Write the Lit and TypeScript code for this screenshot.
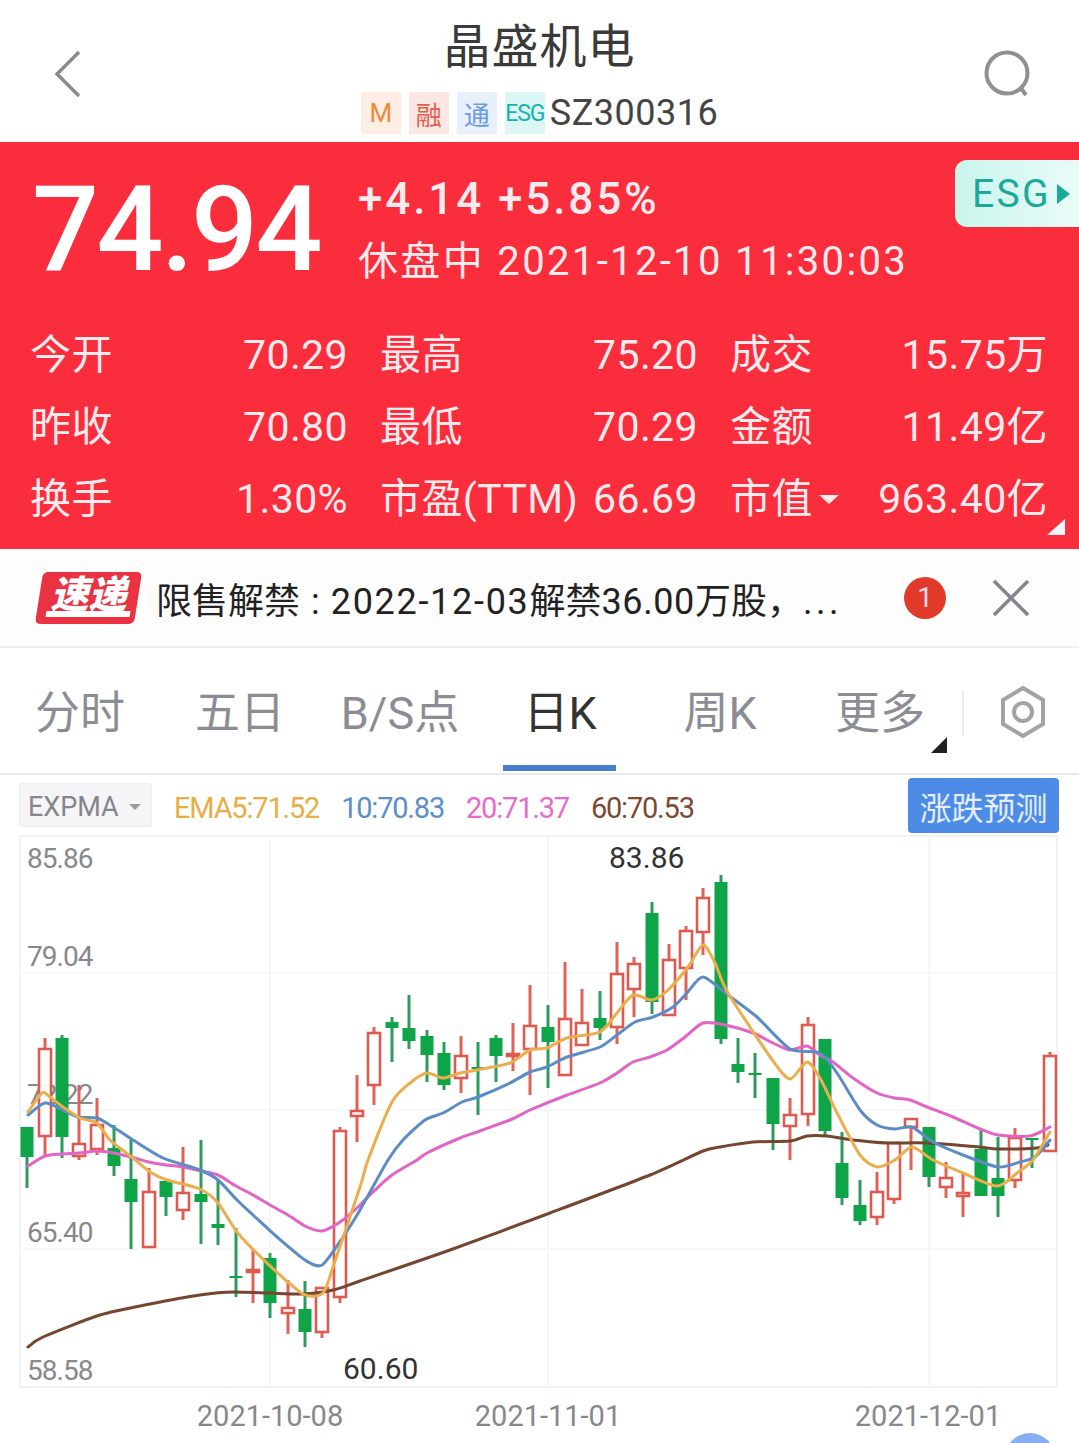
import { LitElement, html, css, svg } from "lit";
import { customElement } from "lit/decorators.js";

type Candle = [number, "r" | "g", number, number, number, number];
const candles: Candle[] = [
  [27,"g",1127,1127,1157,1188],[45,"r",1038,1049,1136,1157],[62,"g",1035,1038,1137,1158],[79,"r",1085,1144,1156,1160],
  [97,"r",1098,1125,1149,1155],[114,"g",1125,1148,1166,1176],[131,"g",1140,1179,1202,1249],[149,"r",1168,1192,1247,1247],
  [166,"g",1180,1181,1197,1216],[183,"r",1147,1193,1210,1220],[201,"g",1140,1194,1202,1244],[218,"g",1180,1224,1228,1245],
  [236,"g",1228,1276,1278,1297],[253,"r",1249,1270,1272,1303],[270,"g",1253,1258,1303,1318],[288,"r",1280,1308,1313,1334],
  [305,"g",1281,1309,1332,1347],[322,"r",1287,1288,1332,1338],[340,"r",1127,1131,1297,1303],[357,"r",1075,1111,1116,1142],
  [374,"r",1027,1033,1085,1105],[392,"g",1017,1022,1028,1062],[409,"g",995,1028,1041,1049],[427,"g",1030,1036,1055,1082],
  [444,"g",1042,1053,1085,1090],[461,"r",1036,1056,1078,1093],[478,"g",1042,1067,1069,1115],[496,"g",1035,1038,1056,1082],
  [513,"r",1023,1054,1056,1071],[530,"r",985,1026,1049,1095],[548,"g",1005,1027,1042,1088],[565,"r",962,1019,1075,1075],
  [582,"r",989,1023,1045,1045],[600,"g",991,1018,1028,1040],[617,"r",942,974,1027,1044],[634,"r",957,964,989,1017],
  [652,"g",902,913,1002,1014],[669,"r",944,960,1015,1015],[686,"r",926,931,968,1000],[703,"r",888,898,932,955],
  [721,"g",875,882,1039,1044],[738,"g",1038,1064,1072,1083],[755,"g",1053,1073,1075,1098],[773,"g",1078,1078,1124,1150],
  [790,"r",1098,1115,1126,1160],[808,"r",1017,1025,1114,1126],[825,"g",1039,1039,1131,1136],[842,"g",1132,1163,1198,1205],
  [860,"g",1180,1205,1221,1225],[877,"r",1172,1192,1217,1225],[894,"r",1142,1143,1199,1204],[911,"r",1119,1119,1127,1170],
  [929,"g",1127,1127,1177,1187],[946,"r",1162,1178,1187,1198],[963,"r",1173,1193,1196,1217],[981,"g",1130,1149,1196,1196],
  [998,"g",1137,1178,1196,1217],[1015,"r",1128,1138,1180,1188],[1032,"g",1138,1138,1140,1168],[1050,"r",1052,1056,1151,1151],
];

const pink = "28,1166 45,1156 62,1154 79,1153 97,1151 114,1153 131,1157 149,1162 166,1165 183,1167 201,1171 218,1175 236,1186 253,1195 270,1205 288,1215 305,1226 322,1231 340,1222 357,1208 374,1191 392,1175 417,1160 427,1153 460,1138 477,1132 510,1120 530,1110 547,1103 567,1095 600,1083 617,1073 633,1062 650,1057 667,1050 685,1037 703,1023 725,1025 753,1033 773,1043 790,1050 807,1046 820,1055 833,1062 853,1078 877,1093 895,1098 910,1100 927,1107 953,1117 980,1129 998,1135 1030,1136 1050,1127";
const blue = "28,1115 45,1103 63,1110 78,1117 97,1118 113,1127 133,1140 163,1158 200,1170 218,1180 237,1200 253,1215 277,1237 305,1260 322,1265 343,1237 360,1210 388,1160 403,1140 425,1120 443,1113 462,1102 478,1097 510,1083 530,1072 547,1067 567,1057 600,1047 617,1035 635,1022 653,1017 673,1007 687,993 703,977 728,995 757,1017 790,1049 820,1053 837,1073 860,1110 877,1125 895,1129 912,1127 933,1142 963,1155 998,1167 1020,1162 1035,1157 1050,1140";
const orange = "28,1112 42,1093 50,1097 63,1107 80,1118 97,1123 110,1140 133,1158 150,1172 167,1180 200,1189 218,1203 237,1232 267,1263 303,1294 323,1293 333,1267 360,1187 368,1160 392,1102 410,1083 427,1073 443,1078 460,1073 477,1070 510,1063 530,1050 547,1048 567,1038 600,1032 617,1013 633,995 652,1000 668,990 688,967 703,945 715,963 728,993 773,1061 790,1079 807,1062 820,1078 837,1113 860,1155 877,1167 895,1160 912,1147 933,1160 963,1173 997,1186 1017,1173 1033,1160 1050,1132";
const brown = "28,1347 43,1337 100,1315 150,1304 200,1295 233,1292 303,1294 333,1290 360,1281 450,1250 550,1213 650,1175 703,1151 720,1147 753,1142 790,1141 807,1136 827,1136 853,1140 887,1143 927,1143 980,1147 997,1149 1037,1148 1048,1145";

/** Turns "x,y x,y ..." into a Catmull-Rom smoothed path. */
function smooth(points: string): string {
  const p = points.split(" ").map((s) => s.split(",").map(Number));
  let d = `M${p[0][0]} ${p[0][1]}`;
  for (let i = 0; i < p.length - 1; i++) {
    const a = p[Math.max(i - 1, 0)], b = p[i], c = p[i + 1], e = p[Math.min(i + 2, p.length - 1)];
    const k = 1 / 8;
    d += ` C${b[0] + (c[0] - a[0]) * k} ${b[1] + (c[1] - a[1]) * k} ${c[0] - (e[0] - b[0]) * k} ${c[1] - (e[1] - b[1]) * k} ${c[0]} ${c[1]}`;
  }
  return d;
}

const stats: [string, string, string, string, string, string][] = [
  ["今开","70.29","最高","75.20","成交","15.75万"],
  ["昨收","70.80","最低","70.29","金额","11.49亿"],
  ["换手","1.30%","市盈(TTM)","66.69","市值","963.40亿"],
];
const tabs = ["分时","五日","B/S点","日K","周K","更多"];

@customElement("app-root")
export class AppRoot extends LitElement {
  static styles = css`
    :host { display: block; width: 1079px; height: 1443px; overflow: hidden; background: #fff; color: #333;
      font-family: Roboto, "Noto Sans CJK SC", sans-serif; }
    .header { height: 142px; display: grid; grid-template-columns: 140px 1fr 140px; align-items: center; background: #fff; }
    .back { justify-self: start; margin-left: 54px; margin-top: 6px; }
    .search { justify-self: end; margin-right: 47px; margin-top: 6px; }
    .mid { display: flex; flex-direction: column; align-items: center; padding-top: 22px; align-self: start; }
    .title { font-size: 47px; line-height: 50px; letter-spacing: 1px; color: #3a3a3a; }
    .sub { display: flex; align-items: center; margin-top: 19px; height: 44px; }
    .tag { width: 40px; height: 42px; margin-right: 8px; display: flex; align-items: center; justify-content: center; font-size: 26px; }
    .tag.m { background: #fdeee4; color: #ec8a3c; }
    .tag.r { background: #fbe7e3; color: #e0604c; }
    .tag.t { background: #e9f0fc; color: #6b9ae6; }
    .tag.e { background: #dcf5f5; color: #19b0b0; font-size: 23px; margin-right: 5px; letter-spacing: -1px; }
    .code { font-size: 36px; letter-spacing: 0.5px; color: #444; }
    .red { height: 407px; background: #f92d3c; color: #fff; position: relative; box-sizing: border-box; padding: 0 30px; }
    .top { display: flex; height: 176px; }
    .price { font-size: 118px; line-height: 1; margin: 29px 0 0 2px; width: 326px; letter-spacing: -2.6px; font-weight: 500; }
    .chg { display: flex; flex-direction: column; padding-top: 31px; color: #fdeaec; }
    .chg1 { font-size: 44px; line-height: 52px; letter-spacing: 2.9px; font-weight: 500; }
    .chg2 { font-size: 40px; line-height: 52px; margin-top: 11px; letter-spacing: 2.35px; }
    .esg { position: absolute; right: 0; top: 18px; width: 124px; height: 67px; box-sizing: border-box; padding-left: 17px;
      border-radius: 12px 0 0 12px; background: linear-gradient(90deg, #c9f5ec, #e9fbf9); color: #1ba99a; font-size: 39px;
      letter-spacing: 2.4px; display: flex; align-items: center; gap: 6px; }
    .esg i { width: 0; height: 0; border-left: 13px solid #1ba99a; border-top: 10px solid transparent; border-bottom: 10px solid transparent; }
    .stats { display: grid; grid-template-columns: 350px 350px 1fr; font-size: 41px; color: #fdeaec; margin-top: 1px; letter-spacing: 0.4px; }
    .cell { display: flex; justify-content: space-between; height: 72px; line-height: 72px; padding-right: 32px; }
    .cell:nth-child(3n) { padding-right: 1px; }
    .label { display: flex; align-items: center; gap: 6px; }
    .label i { width: 0; height: 0; border-top: 9px solid #fdeaec; border-left: 10px solid transparent; border-right: 10px solid transparent; }
    .corner { position: absolute; right: 14px; bottom: 14px; width: 0; height: 0; border-left: 18px solid transparent; border-bottom: 16px solid #f4f4f6; }
    .notice { height: 97px; border-bottom: 2px solid #efefef; display: flex; align-items: center; padding-left: 35px; background: #fdfdfd; }
    .logo { width: 107px; height: 52px; margin-right: 14px; flex: none; position: relative; display: flex; justify-content: center; color: #fff;
      font-size: 38px; font-weight: 900; font-style: italic; line-height: 46px; }
    .logo::before { content: ""; position: absolute; inset: 0 4px; background: #ea3342; border-radius: 5px; transform: skewX(-9deg); }
    .logo::after { content: ""; position: absolute; left: 11px; right: 12px; bottom: 7px; height: 6px; background: #fff; transform: skewX(-9deg); }
    .logo span { position: relative; z-index: 1; }
    .ntext { font-size: 36px; color: #222; white-space: nowrap; width: 748px; }
    .colon { margin: 0 11px; }
    .date { letter-spacing: 1.7px; }
    .num { letter-spacing: 0.6px; }
    .dots { letter-spacing: 3.5px; margin-left: 0; }
    .badge { width: 42px; height: 42px; border-radius: 50%; background: #e23a2a; color: #fde; font-size: 28px; display: flex; align-items: center; justify-content: center; flex: none; }
    .close { margin-left: 46px; flex: none; }
    .tabs { height: 127px; display: flex; border-bottom: 2px solid #e9e9ec; box-sizing: border-box; position: relative; background: #fff; }
    .tab { width: 160px; flex: none; display: flex; align-items: center; justify-content: center; font-size: 45px; color: #8c8c94; padding-bottom: 2px; position: relative; box-sizing: border-box; height: 125px; }
    .tab.on { color: #333; }
    .tab.on::after { content: ""; position: absolute; left: 23px; right: 24px; bottom: 2px; height: 6px; background: #4a7ccc; }
    .more::after { content: ""; position: absolute; right: 13px; bottom: 20px; width: 0; height: 0; border-left: 16px solid transparent; border-bottom: 16px solid #222; }
    .tabs-end { flex: 1; display: flex; align-items: flex-start; padding-top: 38px; }
    .div { width: 2px; height: 46px; background: #eee; margin: 4px 36px 0 2px; }
    .ind { height: 60px; display: flex; align-items: center; padding-left: 19px; font-size: 29px; letter-spacing: -1.2px; position: relative; }
    .sel { width: 133px; height: 44px; box-sizing: border-box; background: #f5f5f7; border: 1px solid #eeeef0; border-radius: 3px; color: #85858c; display: flex; align-items: center; padding: 3px 0 0 8px; gap: 10px; margin-right: 22px; font-size: 27px; letter-spacing: 0; }
    .sel i { width: 0; height: 0; border-top: 6px solid #999; border-left: 6px solid transparent; border-right: 6px solid transparent; }
    .leg { margin-right: 22px; margin-top: 6px; }
    .btn { position: absolute; left: 908px; top: 3px; width: 151px; height: 55px; background: #4c8ce6; color: #e4eeff; border-radius: 4px; font-size: 32px; display: flex; align-items: center; justify-content: center; letter-spacing: 0; }
    .chart { display: block; width: 1079px; height: 608px; }
    .chart text { font-family: Roboto, "Noto Sans CJK SC", sans-serif; font-size: 29px; }
    .chart .axis { font-size: 28px; letter-spacing: -0.95px; }
    .chart .extreme { font-size: 30px; letter-spacing: 0; }
    .chart .dt { font-size: 29px; }
  `;

  private candle(c: Candle) {
    const [x, k, t, bt, bb, b] = c;
    if (k === "g") {
      return svg`<line x1=${x} x2=${x} y1=${t} y2=${b} stroke="#2f9a5e" stroke-width="3"/>
        <rect x=${x - 6.5} y=${bt} width="13" height=${Math.max(bb - bt, 2)} fill="#0ea548"/>`;
    }
    return svg`<line x1=${x} x2=${x} y1=${t} y2=${bt} stroke="#dd6359" stroke-width="3"/>
      <line x1=${x} x2=${x} y1=${bb} y2=${b} stroke="#dd6359" stroke-width="3"/>
      <rect x=${x - 6} y=${bt} width="12" height=${Math.max(bb - bt, 2)} fill="#fff" fill-opacity="0.9" stroke="#dc5a50" stroke-width="2.6"/>`;
  }

  render() {
    return html`
      <div class="header">
        <svg class="back" width="28" height="48" viewBox="0 0 28 48"><path d="M25 2 L3 24 L25 46" fill="none" stroke="#8a8a8e" stroke-width="3.5"/></svg>
        <div class="mid">
          <div class="title">晶盛机电</div>
          <div class="sub">
            <span class="tag m">M</span><span class="tag r">融</span><span class="tag t">通</span><span class="tag e">ESG</span>
            <span class="code">SZ300316</span>
          </div>
        </div>
        <svg class="search" width="48" height="48" viewBox="0 0 48 48"><circle cx="23" cy="23" r="20.5" fill="none" stroke="#909094" stroke-width="4"/><path d="M36 37 L42 45" stroke="#909094" stroke-width="4" fill="none"/></svg>
      </div>

      <div class="red">
        <div class="top">
          <div class="price">74.94</div>
          <div class="chg">
            <div class="chg1">+4.14 +5.85%</div>
            <div class="chg2">休盘中 2021-12-10 11:30:03</div>
          </div>
        </div>
        <div class="esg">ESG<i></i></div>
        <div class="stats">
          ${stats.map((r) => html`
            <div class="cell"><span class="label">${r[0]}</span><span>${r[1]}</span></div>
            <div class="cell"><span class="label">${r[2]}</span><span>${r[3]}</span></div>
            <div class="cell"><span class="label">${r[4]}${r[4] === "市值" ? html`<i></i>` : ""}</span><span>${r[5]}</span></div>
          `)}
        </div>
        <div class="corner"></div>
      </div>

      <div class="notice">
        <div class="logo"><span>速递</span></div>
        <div class="ntext">限售解禁<span class="colon">:</span><span class="date">2022-12-03</span>解禁<span class="num">36.00</span>万股，<span class="dots">...</span></div>
        <div class="badge">1</div>
        <svg class="close" width="38" height="38" viewBox="0 0 38 38"><path d="M2 2 L36 36 M36 2 L2 36" stroke="#85858c" stroke-width="3.5" fill="none"/></svg>
      </div>

      <div class="tabs">
        ${tabs.map((t) => html`<div class="tab ${t === "日K" ? "on" : ""} ${t === "更多" ? "more" : ""}">${t}</div>`)}
        <div class="tabs-end">
          <div class="div"></div>
          <svg width="46" height="52" viewBox="0 0 46 52"><path d="M23 2 L43 14 V38 L23 50 L3 38 V14 Z" fill="none" stroke="#a2a2a8" stroke-width="4"/><circle cx="23" cy="26" r="9" fill="none" stroke="#a2a2a8" stroke-width="4"/></svg>
        </div>
      </div>

      <div class="ind">
        <div class="sel">EXPMA<i></i></div>
        <span class="leg" style="color:#e6ae45">EMA5:71.52</span>
        <span class="leg" style="color:#5b8fc9">10:70.83</span>
        <span class="leg" style="color:#e56cc8">20:71.37</span>
        <span class="leg" style="color:#7c4a32">60:70.53</span>
        <div class="btn">涨跌预测</div>
      </div>

      <svg class="chart" viewBox="0 835 1079 608">
        <g stroke="#f2f2f4" stroke-width="2" fill="none">
          <rect x="20" y="836" width="1037" height="551"/>
          <path d="M270 836 V1387 M548 836 V1387 M929 836 V1387" stroke="#f6f6f7"/>
          <path d="M20 973 H1057 M20 1110 H1057 M20 1249 H1057" stroke="#f8f8f9"/>
        </g>
        <g fill="#87878d">
          <text class="axis" x="27" y="868">85.86</text>
          <text class="axis" x="27" y="966">79.04</text>
          <text class="axis" x="27" y="1104">72.22</text>
          <text class="axis" x="27" y="1242">65.40</text>
          <text class="axis" x="27" y="1380">58.58</text>
        </g>
        ${candles.map((c) => this.candle(c))}
        <g fill="none" stroke-width="3" stroke-linejoin="round" stroke-linecap="round">
          <path d=${smooth(brown)} stroke="#74452f"/>
          <path d=${smooth(pink)} stroke="#e264c4"/>
          <path d=${smooth(blue)} stroke="#5c8cc6"/>
          <path d=${smooth(orange)} stroke="#eaae4c"/>
        </g>
        <text class="extreme" x="609" y="868" fill="#333">83.86</text>
        <text class="extreme" x="343" y="1379" fill="#333">60.60</text>
        <g fill="#87878d" text-anchor="middle">
          <text class="dt" x="270" y="1426">2021-10-08</text>
          <text class="dt" x="548" y="1426">2021-11-01</text>
          <text class="dt" x="928" y="1426">2021-12-01</text>
        </g>
        <circle cx="1030" cy="1458" r="25" fill="#86aef0"/>
      </svg>
    `;
  }
}
